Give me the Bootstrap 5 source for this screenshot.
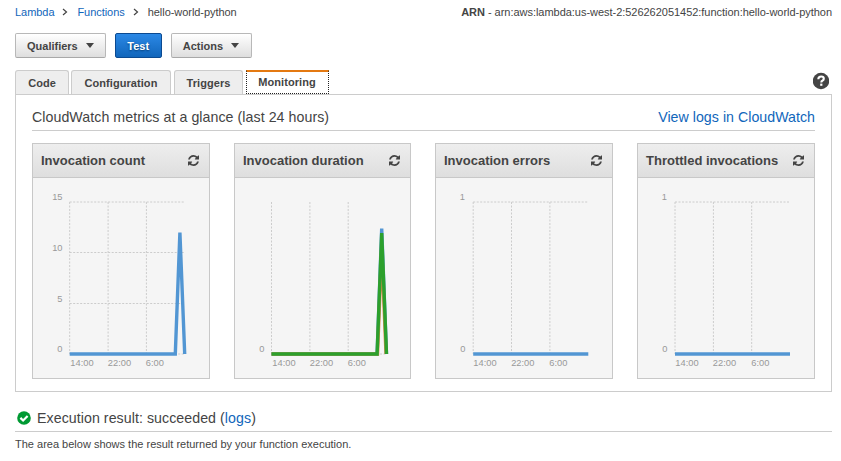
<!DOCTYPE html>
<html lang="en">
<head>
<meta charset="utf-8">
<title>Lambda - hello-world-python</title>
<link href="https://cdn.jsdelivr.net/npm/bootstrap@5.3.0/dist/css/bootstrap.min.css" rel="stylesheet">
<style>
body{font-family:"Liberation Sans",Arial,sans-serif;font-size:11px;line-height:14px;color:#444;background:#fff;overflow:hidden}
a{color:#1166bb;text-decoration:none}
.page{padding:5px 9px 0 15px}
.crumbs{letter-spacing:-.05px}
.crumbs svg{margin:0 9px 0 8px}
.arn{letter-spacing:-.03px}
.actions{gap:9px;margin-top:14px}
.console-btn{--bs-btn-font-size:11px;--bs-btn-line-height:14px;--bs-btn-font-weight:700;--bs-btn-padding-y:0;--bs-btn-padding-x:11px;--bs-btn-border-radius:2px;--bs-btn-color:#444;height:25px;border-color:#b8b8b8 #b8b8b8 #a8a8a8;background:linear-gradient(#fff,#dedede)}
.run-btn{width:47px;color:#fff;border-color:#0b4a91;background:linear-gradient(#2b88e6,#1166bb);text-shadow:0 1px 2px #033b74}
.menu-btn{width:81px}
.caret-down{width:0;height:0;border:4px solid transparent;border-top:5px solid #444;border-bottom:0;margin-left:8px}
.tabs{height:24px;margin-top:12px}
.tabs .nav-link{height:24px;padding:5px 0 0;text-align:center;font-weight:700;letter-spacing:.06px;color:#444;background:#eee;border:1px solid #ccc;border-bottom:0;border-radius:3px 3px 0 0}
.tabs .nav-link.active{color:#444;background:#fff;border:1px dotted #222;border-top:2px solid #e47911;border-radius:0;padding:3px 1px 0 0}
.t1{width:54px}.t2{width:100px;margin-left:2px}.t3{width:69px;margin-left:3px}.t4{width:83px;margin-left:3px}
.help{margin-right:3px}
.panel{border:1px solid #ccc;height:298px;padding:0 16px}
.title{font-size:14.2px;line-height:16px;letter-spacing:.06px}
.logs-link{letter-spacing:.03px}
.panel-title{height:36px;padding-top:14px;border-bottom:1px solid #ccc;margin-bottom:12px}
.metrics{display:grid;grid-template-columns:178px 177px 178px 178px;justify-content:space-between}
.metric{--bs-card-border-radius:0;--bs-card-inner-border-radius:0;--bs-card-border-color:#c8c8c8;--bs-card-bg:#f5f5f5;--bs-card-color:#444;height:236px}
.metric .card-header{height:34px;padding:0 10px 0 8px;background:linear-gradient(#eee,#dedede);border-bottom:1px solid #c8c8c8;font-size:13px;font-weight:700;white-space:nowrap}
.metric .card-header svg{margin-bottom:1px}
.chart{display:block;font-size:9.3px;fill:#999;overflow:visible}
.grid-line{stroke:#ccc;stroke-width:1;stroke-dasharray:2 1.5;fill:none}
.series{fill:none;stroke-width:3.4}
.result{height:28px;margin-top:12px;border-bottom:1px solid #ccc;padding:1px 0 0 2px;gap:6px}
.note{margin:5px 0 0}
</style>
</head>
<body>
<svg class="d-none" aria-hidden="true">
  <symbol id="refresh" viewBox="0 0 1536 1536"><path fill="#444" d="M1511 928q0 5-1 7-64 268-268 434.500T764 1536q-146 0-282.500-55T238 1324l-129 129q-19 19-45 19t-45-19-19-45V960q0-26 19-45t45-19h448q26 0 45 19t19 45-19 45l-137 137q71 66 161 102t187 36q134 0 250-65t186-179q11-17 53-117 8-23 30-23h192q13 0 22.500 9.500T1511 928zm25-800v448q0 26-19 45t-45 19h-448q-26 0-45-19t-19-45 19-45l138-138Q969 256 768 256q-134 0-250 65T332 500q-11 17-53 117-8 23-30 23H50q-13 0-22.500-9.500T18 608v-7q65-268 270-434.500T768 0q146 0 284 55.500T1297 212l130-129q19-19 45-19t45 19 19 45z"/></symbol>
</svg>
<main class="page">
  <div class="d-flex justify-content-between">
    <nav class="crumbs d-flex align-items-center">
      <a href="#">Lambda</a><svg width="6" height="8"><path d="M1 1l3.500 3L1 7" fill="none" stroke="#444" stroke-width="1.200"/></svg>
      <a href="#">Functions</a><svg width="6" height="8"><path d="M1 1l3.500 3L1 7" fill="none" stroke="#444" stroke-width="1.200"/></svg>
      <span>hello-world-python</span>
    </nav>
    <div class="arn"><b>ARN</b> - arn:aws:lambda:us-west-2:526262051452:function:hello-world-python</div>
  </div>
  <div class="d-flex actions">
    <button class="btn console-btn d-flex align-items-center">Qualifiers<i class="caret-down"></i></button>
    <button class="btn console-btn run-btn d-flex align-items-center justify-content-center">Test</button>
    <button class="btn console-btn menu-btn d-flex align-items-center">Actions<i class="caret-down"></i></button>
  </div>
  <div class="d-flex justify-content-between tabs">
    <ul class="nav flex-nowrap">
      <li class="t1"><a class="nav-link" href="#">Code</a></li>
      <li class="t2"><a class="nav-link" href="#">Configuration</a></li>
      <li class="t3"><a class="nav-link" href="#">Triggers</a></li>
      <li class="t4"><a class="nav-link active" href="#">Monitoring</a></li>
    </ul>
    <svg class="help" width="16" height="24" viewBox="0 0 16 24"><circle cx="8" cy="11" r="8.200" fill="#444"/><path d="M5.300 9.200Q5.400 6.500 8.200 6.500q2.600 0 2.600 2.200 0 1.200-1.500 2-1 .5-1 1.700" fill="none" stroke="#fff" stroke-width="2.100"/><rect x="7.200" y="13.600" width="2.200" height="2.200" fill="#fff"/></svg>
  </div>
  <section class="panel">
    <div class="panel-title title d-flex justify-content-between">
      <span>CloudWatch metrics at a glance (last 24 hours)</span><a class="logs-link" href="#">View logs in CloudWatch</a>
    </div>
    <div class="metrics">
      <article class="card metric">
        <div class="card-header d-flex align-items-center justify-content-between">Invocation count<svg width="11" height="11"><use href="#refresh"/></svg></div>
        <svg class="chart" width="175" height="199" viewBox="33 178 175 199">
          <path class="grid-line" d="M69.700 202H185M69.700 252.500H185M69.700 303.500H185M69.700 354H185M69.700 202V354M108.100 202V354M146.400 202V354"/>
          <g text-anchor="end"><text x="62.500" y="200">15</text><text x="62.500" y="251">10</text><text x="62.500" y="302">5</text><text x="62.500" y="352">0</text></g>
          <text x="70.300" y="366">14:00</text><text x="107.800" y="366">22:00</text><text x="145.800" y="366">6:00</text>
          <path class="series" stroke="#5296d3" d="M69.700 354H175.300L179.900 232.500L184.700 354"/>
        </svg>
      </article>
      <article class="card metric">
        <div class="card-header d-flex align-items-center justify-content-between">Invocation duration<svg width="11" height="11"><use href="#refresh"/></svg></div>
        <svg class="chart" width="175" height="199" viewBox="33 178 175 199">
          <path class="grid-line" d="M69.500 354H185M69.500 202V354M107.900 202V354M146.200 202V354"/>
          <text x="62.300" y="352" text-anchor="end">0</text>
          <text x="70.300" y="366">14:00</text><text x="107.800" y="366">22:00</text><text x="145.800" y="366">6:00</text>
          <path class="series" stroke="#5296d3" d="M69.500 354H175.100L179.700 228.500L184.500 354"/>
          <path class="series" stroke="#e08a4a" d="M69.500 354H175.500L179.700 248L184 354"/>
          <path class="series" stroke="#2ca02c" d="M69.500 354H175.100L179.700 233L184.500 354"/>
        </svg>
      </article>
      <article class="card metric">
        <div class="card-header d-flex align-items-center justify-content-between">Invocation errors<svg width="11" height="11"><use href="#refresh"/></svg></div>
        <svg class="chart" width="175" height="199" viewBox="33 178 175 199">
          <path class="grid-line" d="M70.200 202H185M70.200 202V354M108.500 202V354M146.900 202V354"/>
          <text x="62" y="200" text-anchor="end">1</text><text x="62.500" y="352" text-anchor="end">0</text>
          <text x="70.300" y="366">14:00</text><text x="108.200" y="366">22:00</text><text x="146.300" y="366">6:00</text>
          <path class="series" stroke="#5296d3" d="M70.200 354H185.300"/>
        </svg>
      </article>
      <article class="card metric">
        <div class="card-header d-flex align-items-center justify-content-between">Throttled invocations<svg width="11" height="11"><use href="#refresh"/></svg></div>
        <svg class="chart" width="175" height="199" viewBox="33 178 175 199">
          <path class="grid-line" d="M70 202H185M70 202V354M108.400 202V354M146.700 202V354"/>
          <text x="62" y="200" text-anchor="end">1</text><text x="62.500" y="352" text-anchor="end">0</text>
          <text x="70.300" y="366">14:00</text><text x="107.800" y="366">22:00</text><text x="146.300" y="366">6:00</text>
          <path class="series" stroke="#5296d3" d="M70 354H185"/>
        </svg>
      </article>
    </div>
  </section>
  <div class="result title d-flex align-items-center">
    <svg width="14" height="14" viewBox="0 0 14 14"><circle cx="7" cy="7" r="6.800" fill="#093"/><path d="M3.400 6.900l2.700 2.600 4.500-4.600" fill="none" stroke="#fff" stroke-width="2.200"/></svg>
    <span>Execution result: succeeded (<a href="#">logs</a>)</span>
  </div>
  <p class="note">The area below shows the result returned by your function execution.</p>
</main>
<script src="https://cdn.jsdelivr.net/npm/bootstrap@5.3.0/dist/js/bootstrap.bundle.min.js"></script>
</body>
</html>
